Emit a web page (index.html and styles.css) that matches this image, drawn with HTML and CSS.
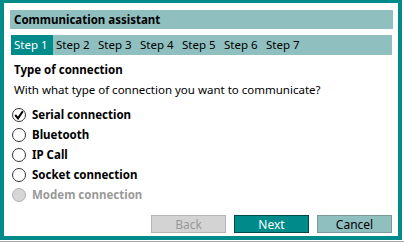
FILE: index.html
```html
<!DOCTYPE html>
<html lang="en">
<head>
    <meta charset="UTF-8">
    <title>Communication assistant</title>
    <link rel="stylesheet" href="styles.css">
</head>
<body>
    <div class="window">
        <div class="title-bar">Communication assistant</div>

        <div class="steps">
            <span class="step active">Step 1</span>
            <span class="step">Step 2</span>
            <span class="step">Step 3</span>
            <span class="step">Step 4</span>
            <span class="step">Step 5</span>
            <span class="step">Step 6</span>
            <span class="step">Step 7</span>
        </div>

        <div class="content">
            <div class="heading">Type of connection</div>
            <div class="question">With what type of connection you want to communicate?</div>

            <div class="options">
                <label class="option checked">
                    <span class="radio">
                        <svg width="10" height="10" viewBox="0 0 10 10"><path d="M1.2 5 L4 8.4 L8.8 1.2" fill="none" stroke="#000" stroke-width="2"/></svg>
                    </span>
                    Serial connection
                </label>
                <label class="option"><span class="radio"></span>Bluetooth</label>
                <label class="option"><span class="radio"></span>IP Call</label>
                <label class="option"><span class="radio"></span>Socket connection</label>
                <label class="option disabled"><span class="radio"></span>Modem connection</label>
            </div>
        </div>

        <div class="buttons">
            <button class="btn btn-back" disabled>Back</button>
            <button class="btn btn-next">Next</button>
            <button class="btn btn-cancel">Cancel</button>
        </div>
    </div>
    <div class="shadow-line"></div>
</body>
</html>
```

FILE: styles.css
```css
:root {
    --teal: #008b8b;
    --light-teal: #8fbfbf;
    --text-color: #000;
    --disabled-text: #9a9a9a;
}

body {
    margin: 0;
    font-family: 'Noto Sans', sans-serif;
    font-size: 11.5px;
    color: var(--text-color);
    background: #fff;
}

.window {
    width: 402px;
    height: 240px;
    box-sizing: border-box;
    border: 4px solid var(--teal);
    border-top-width: 3px;
    padding: 7px 5px 3px 6px;
    display: flex;
    flex-direction: column;
}

.title-bar {
    background: var(--light-teal);
    height: 19px;
    line-height: 19px;
    padding-left: 4px;
    font-weight: 700;
}

.steps {
    margin-top: 6px;
    margin-left: 1px;
    margin-right: 1px;
    background: var(--light-teal);
    height: 20px;
    display: flex;
    gap: 3px;
}

.step {
    width: 39px;
    line-height: 20px;
    padding-left: 3px;
    box-sizing: border-box;
}

.step.active {
    background: var(--teal);
    color: #fff;
    width: 42px;
    margin-right: -3px;
}

.content {
    padding-left: 4px;
    flex: 1;
}

.heading {
    margin-top: 7px;
    font-weight: 700;
    line-height: 16px;
}

.question {
    margin-top: 4px;
    line-height: 16px;
}

.options {
    margin-top: 9px;
    display: flex;
    flex-direction: column;
    gap: 4px;
}

.option {
    display: flex;
    align-items: center;
    gap: 6px;
    font-weight: 700;
    line-height: 16px;
    margin-left: -2px;
}

.radio {
    width: 14px;
    height: 14px;
    box-sizing: border-box;
    border: 1px solid #333;
    border-radius: 50%;
    background: #fff;
    display: flex;
    align-items: center;
    justify-content: center;
}

.option.disabled {
    color: var(--disabled-text);
}

.option.disabled .radio {
    background: #d6d6d6;
    border-color: #b0b0b0;
}

.buttons {
    display: flex;
    justify-content: flex-end;
    gap: 8px;
    margin-right: 1px;
}

.btn {
    width: 75px;
    height: 18px;
    font-family: inherit;
    font-size: 12px;
    padding: 0;
    border: 1px solid #888;
}

.btn-back {
    background: #d3d3d3;
    border-color: #b5b5b5;
    color: var(--disabled-text);
}

.btn-next {
    background: var(--teal);
    border-color: #004a4a;
    color: #fff;
}

.btn-cancel {
    background: var(--light-teal);
    border-color: #7a9a9a;
    color: #000;
}

.shadow-line {
    margin-top: 1px;
    height: 1px;
    background: #a5a5a5;
}
```
